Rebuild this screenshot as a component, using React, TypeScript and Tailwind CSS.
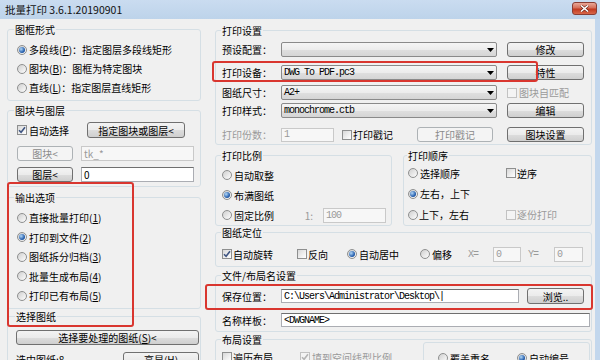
import React from "react";

const mono = "font-['Liberation_Mono',monospace] text-[10px] tracking-[-1px]";

function Radio({ on }: { on?: boolean }) {
  return (
    <span className="w-[10px] h-[10px] shrink-0 rounded-full border border-[#8e8f8f] bg-[linear-gradient(135deg,#cfcfcf,#fdfdfd)] flex items-center justify-center">
      {on && (
        <span className="w-[6px] h-[6px] rounded-full bg-[radial-gradient(circle_at_35%_35%,#b3d8f7,#2a63b0_60%,#163b7a)]" />
      )}
    </span>
  );
}

function Check({ on, off }: { on?: boolean; off?: boolean }) {
  return (
    <span
      className={`w-[10px] h-[10px] shrink-0 border flex items-center justify-center ${
        off
          ? "border-[#c2c2c2] bg-[#f4f4f4]"
          : "border-[#8e8f8f] bg-[linear-gradient(135deg,#d8d8d8,#ffffff)]"
      }`}
    >
      {on && (
        <svg width="8" height="8" viewBox="0 0 8 8">
          <path
            d="M1 4.2 L3.1 6.3 L7 1.3"
            fill="none"
            stroke={off ? "#b4b4b4" : "#3f5582"}
            strokeWidth="1.6"
          />
        </svg>
      )}
    </span>
  );
}

function Btn({
  children,
  className,
  disabled,
}: {
  children: React.ReactNode;
  className?: string;
  disabled?: boolean;
}) {
  return (
    <div
      className={`h-[15px] shrink-0 flex items-center justify-center rounded-[3px] border ${
        disabled
          ? "border-[#adb2b5] bg-[#f4f4f4] text-[#8a8a8a]"
          : "border-[#707070] bg-[linear-gradient(#f3f3f3_0%,#ebebeb_50%,#dddddd_51%,#cfcfcf_100%)]"
      } ${className ?? ""}`}
    >
      {children}
    </div>
  );
}

function Combo({ value, className }: { value: string; className?: string }) {
  return (
    <div
      className={`h-[15px] shrink-0 flex items-center rounded-[2px] border border-[#8a8a8a] bg-[linear-gradient(#f5f5f5_0%,#ececec_50%,#dfdfdf_51%,#d5d5d5_100%)] pl-[2px] pr-[2px] ${className ?? ""}`}
    >
      <span className={`flex-1 ${mono}`}>{value}</span>
      <svg width="7" height="4" viewBox="0 0 7 4">
        <path d="M0 0 H7 L3.5 4 Z" fill="#000" />
      </svg>
    </div>
  );
}

function Field({
  value,
  className,
  disabled,
  code,
}: {
  value: string;
  className?: string;
  disabled?: boolean;
  code?: boolean;
}) {
  return (
    <div
      className={`h-[14px] shrink-0 flex items-center pl-[2px] border ${
        disabled
          ? "border-[#c9c9c9] bg-[#f7f7f7] text-[#9a9a9a]"
          : "border-[#abadb3] border-t-[#6f6f6f] bg-white"
      } ${code ? mono : ""} ${className ?? ""}`}
    >
      {value}
    </div>
  );
}

function Group({
  title,
  className,
  legend,
  children,
}: {
  title: string;
  className?: string;
  legend?: string;
  children: React.ReactNode;
}) {
  return (
    <fieldset className={`border border-[#d5dfe5] rounded-[3px] ${className ?? ""}`}>
      <legend className={`px-[1px] leading-[13px] ${legend ?? ""}`}>{title}</legend>
      {children}
    </fieldset>
  );
}

export default function App() {
  return (
    <div className="relative w-[600px] h-[360px] overflow-hidden flex flex-col bg-[#c3d7ed] font-['Noto_Sans_CJK_SC',sans-serif] text-[10px] leading-[13px] text-black">
      {/* title bar */}
      <div className="h-[19px] shrink-0 flex items-start bg-[linear-gradient(#cadcf0,#bdd3ea)]">
        <span className="mt-[3px] ml-[5px] text-[10.5px] text-[#111]">批量打印 3.6.1.20190901</span>
        <div className="ml-auto mr-[3px] mt-[2px] w-[25px] h-[13px] rounded-[3px] border border-[#8a3d33] bg-[linear-gradient(#e9a898,#d56e58_45%,#c1391f_55%,#d8674a)] flex items-center justify-center">
          <svg width="9" height="7" viewBox="0 0 9 7">
            <path d="M1 0.5 L8 6.5 M8 0.5 L1 6.5" stroke="#5a1a10" strokeWidth="2.6" />
            <path d="M1 0.5 L8 6.5 M8 0.5 L1 6.5" stroke="#fff" strokeWidth="1.6" />
          </svg>
        </div>
      </div>

      <div className="flex w-[595px] flex-1 bg-[#f0f0f0]">
        {/* left column */}
        <div className="ml-[7px] w-[194px] pt-[4px] flex flex-col">
          <Group title="图框形式" className="pl-[9px] pr-[6px] pb-[3px]" legend="-ml-[3px]">
            <div className="pt-[4px] flex flex-col">
              <div className="h-[19px] flex items-center gap-[2px]">
                <Radio on />
                <span>多段线(<u>P</u>)：指定图层多段线矩形</span>
              </div>
              <div className="h-[19px] flex items-center gap-[2px]">
                <Radio />
                <span>图块(<u>B</u>)：图框为特定图块</span>
              </div>
              <div className="h-[19px] flex items-center gap-[2px]">
                <Radio />
                <span>直线(<u>L</u>)：指定图层直线矩形</span>
              </div>
            </div>
          </Group>

          <Group title="图块与图层" className="mt-[3px] pl-[9px] pr-[6px] pb-[4px]" legend="-ml-[3px]">
            <div className="mt-[5px] h-[16px] flex items-center">
              <Check on />
              <span className="ml-[2px]">自动选择</span>
              <Btn className="ml-[18px] w-[98px] h-[16px]">指定图块或图层&lt;</Btn>
            </div>
            <div className="mt-[8px] flex items-center">
              <Btn disabled className="w-[56px]">图块&lt;</Btn>
              <Field disabled value="tk_*" className="ml-[8px] flex-1 h-[15px]" />
            </div>
            <div className="mt-[6px] flex items-center">
              <Btn className="w-[56px]">图层&lt;</Btn>
              <Field value="0" className="ml-[8px] flex-1 h-[15px]" />
            </div>
          </Group>

          <Group title="输出选项" className="mt-[4px] pl-[9px] pr-[6px] pb-[2px]" legend="-ml-[3px]">
            <div className="mt-[4px] flex flex-col">
              <div className="h-[19.5px] flex items-center gap-[2px]">
                <Radio />
                <span>直接批量打印(<u>1</u>)</span>
              </div>
              <div className="h-[19.5px] flex items-center gap-[2px]">
                <Radio on />
                <span>打印到文件(<u>2</u>)</span>
              </div>
              <div className="h-[19.5px] flex items-center gap-[2px]">
                <Radio />
                <span>图纸拆分归档(<u>3</u>)</span>
              </div>
              <div className="h-[19.5px] flex items-center gap-[2px]">
                <Radio />
                <span>批量生成布局(<u>4</u>)</span>
              </div>
              <div className="h-[19.5px] flex items-center gap-[2px]">
                <Radio />
                <span>打印已有布局(<u>5</u>)</span>
              </div>
            </div>
          </Group>

          <Group title="选择图纸" className="mt-[1px] pl-[8px] pr-[1px]" legend="-ml-[1px]">
            <Btn className="mt-[7px] w-full">选择要处理的图纸(<u>S</u>)&lt;</Btn>
            <div className="mt-[7px] flex items-center justify-between">
              <span>选中图纸:8</span>
              <Btn className="w-[76px]">高显(<u>H</u>)</Btn>
            </div>
          </Group>
        </div>

        {/* right column */}
        <div className="ml-[14px] w-[377px] pt-[5px] flex flex-col">
          <Group title="打印设置" className="pl-[6px] pr-[7px] pb-[2px]" legend="-ml-[1px]">
            <div className="mt-[5px] h-[15px] flex items-center">
              <span className="w-[59px] shrink-0">预设配置：</span>
              <Combo value="" className="w-[216px]" />
              <Btn className="ml-[10px] w-[77px]">修改</Btn>
            </div>
            <div className="mt-[8px] h-[15px] flex items-center">
              <span className="w-[59px] shrink-0">打印设备：</span>
              <Combo value="DWG To PDF.pc3" className="w-[216px]" />
              <Btn className="ml-[10px] w-[77px]">特性</Btn>
            </div>
            <div className="mt-[5px] h-[15px] flex items-center">
              <span className="w-[59px] shrink-0">图纸尺寸：</span>
              <Combo value="A2+" className="w-[216px]" />
              <div className="ml-[10px] flex items-center gap-[2px] text-[#9a9a9a]">
                <Check off />
                <span>图块自匹配</span>
              </div>
            </div>
            <div className="mt-[3px] h-[15px] flex items-center">
              <span className="w-[59px] shrink-0">打印样式：</span>
              <Combo value="monochrome.ctb" className="w-[216px]" />
              <Btn className="ml-[10px] w-[77px]">编辑</Btn>
            </div>
            <div className="mt-[9px] h-[15px] flex items-center">
              <span className="w-[59px] shrink-0 text-[#9a9a9a]">打印份数：</span>
              <Field disabled code value="1" className="w-[53px]" />
              <div className="ml-[8px] w-[75px] shrink-0 flex items-center gap-[1px]">
                <Check />
                <span>打印戳记</span>
              </div>
              <Btn disabled className="w-[76px]">打印戳记</Btn>
              <Btn className="ml-[14px] w-[77px]">图块设置</Btn>
            </div>
          </Group>

          <div className="mt-[4px] flex">
            <Group title="打印比例" className="w-[177px] shrink-0 pl-[6px] pr-[5px]" legend="-ml-[1px]">
              <div className="mt-[3px] flex flex-col">
                <div className="h-[20px] flex items-center gap-[2px]">
                  <Radio />
                  <span>自动取整</span>
                </div>
                <div className="h-[20px] flex items-center gap-[2px]">
                  <Radio on />
                  <span>布满图纸</span>
                </div>
                <div className="h-[20px] flex items-center gap-[2px]">
                  <Radio />
                  <span>固定比例</span>
                  <span className="ml-auto mr-[8px] text-[#9a9a9a]">1:</span>
                  <Field disabled code value="100" className="w-[63px] h-[15px]" />
                </div>
              </div>
            </Group>
            <Group title="打印顺序" className="ml-[11px] flex-1 min-w-0 pl-[4px] pr-[4px]" legend="-ml-[1px]">
              <div className="mt-[1px] flex flex-col">
                <div className="h-[20px] flex items-center">
                  <div className="w-[98px] flex items-center gap-[2px]">
                    <Radio />
                    <span>选择顺序</span>
                  </div>
                  <div className="flex items-center gap-[1px]">
                    <Check />
                    <span>逆序</span>
                  </div>
                </div>
                <div className="h-[21px] flex items-center gap-[2px]">
                  <Radio on />
                  <span>左右，上下</span>
                </div>
                <div className="h-[21px] flex items-center">
                  <div className="w-[98px] flex items-center gap-[1px]">
                    <Radio />
                    <span>上下，左右</span>
                  </div>
                  <div className="flex items-center gap-[1px] text-[#9a9a9a]">
                    <Check off />
                    <span>逐份打印</span>
                  </div>
                </div>
              </div>
            </Group>
          </div>

          <Group title="图纸定位" className="pl-[6px] pr-[7px] pb-[4px]" legend="-ml-[1px]">
            <div className="mt-[7px] h-[16px] flex items-center">
              <div className="w-[75px] shrink-0 flex items-center gap-[1px]">
                <Check on />
                <span>自动旋转</span>
              </div>
              <div className="w-[50px] shrink-0 flex items-center gap-[1px]">
                <Check />
                <span>反向</span>
              </div>
              <div className="w-[73px] shrink-0 flex items-center gap-[2px]">
                <Radio on />
                <span>自动居中</span>
              </div>
              <div className="w-[48px] shrink-0 flex items-center gap-[2px]">
                <Radio />
                <span>偏移</span>
              </div>
              <span className={`w-[25px] shrink-0 text-[#9a9a9a] ${mono}`}>X=</span>
              <Field disabled code value="0" className="w-[28px] h-[15px]" />
              <span className={`ml-[7px] w-[26px] shrink-0 text-[#9a9a9a] ${mono}`}>Y=</span>
              <Field disabled code value="0" className="w-[29px] h-[15px]" />
            </div>
          </Group>

          <Group title="文件/布局名设置" className="mt-[2px] pl-[6px] pr-[1px] pb-[4px]" legend="-ml-[1px]">
            <div className="mt-[6px] h-[16px] flex items-center">
              <span className="w-[59px] shrink-0">保存位置：</span>
              <Field code value="C:\Users\Administrator\Desktop\|" className="w-[238px]" />
              <Btn className="ml-[8px] w-[57px] h-[16px]">浏览..</Btn>
            </div>
            <div className="mt-[9px] h-[14px] flex items-center">
              <span className="w-[59px] shrink-0">名称样板：</span>
              <Field code value="<DWGNAME>" className="w-[309px]" />
            </div>
          </Group>

          <Group title="布局设置" className="mt-[1px] pl-[6px] pr-[1px]" legend="-ml-[1px]">
            <div className="mt-[3px] flex items-start">
              <div className="w-[78px] h-[16px] shrink-0 flex items-center gap-[1px]">
                <Check />
                <span>遍历布局</span>
              </div>
              <div className="w-[123px] h-[16px] shrink-0 flex items-center gap-[2px] text-[#9a9a9a]">
                <Check on off />
                <span>填到空间线型比例</span>
              </div>
              <div className="flex-1 -mt-[7px] pt-[7px] h-[30px] border border-[#d5dfe5] rounded-[3px] pl-[14px] flex items-start">
                <div className="w-[79px] h-[16px] flex items-center gap-[2px]">
                  <Radio />
                  <span>覆盖重名</span>
                </div>
                <div className="h-[16px] flex items-center gap-[2px]">
                  <Radio on />
                  <span>自动编号</span>
                </div>
              </div>
            </div>
          </Group>
        </div>
      </div>

      {/* red annotation boxes */}
      <div className="absolute left-[212px] top-[61px] w-[326px] h-[21px] border-2 border-[#d9362f] rounded-[3px] pointer-events-none" />
      <div className="absolute left-[7px] top-[182px] w-[127px] h-[145px] border-2 border-[#d9362f] rounded-[3px] pointer-events-none" />
      <div className="absolute left-[205px] top-[284px] w-[388px] h-[26px] border-2 border-[#d9362f] rounded-[3px] pointer-events-none" />
    </div>
  );
}
